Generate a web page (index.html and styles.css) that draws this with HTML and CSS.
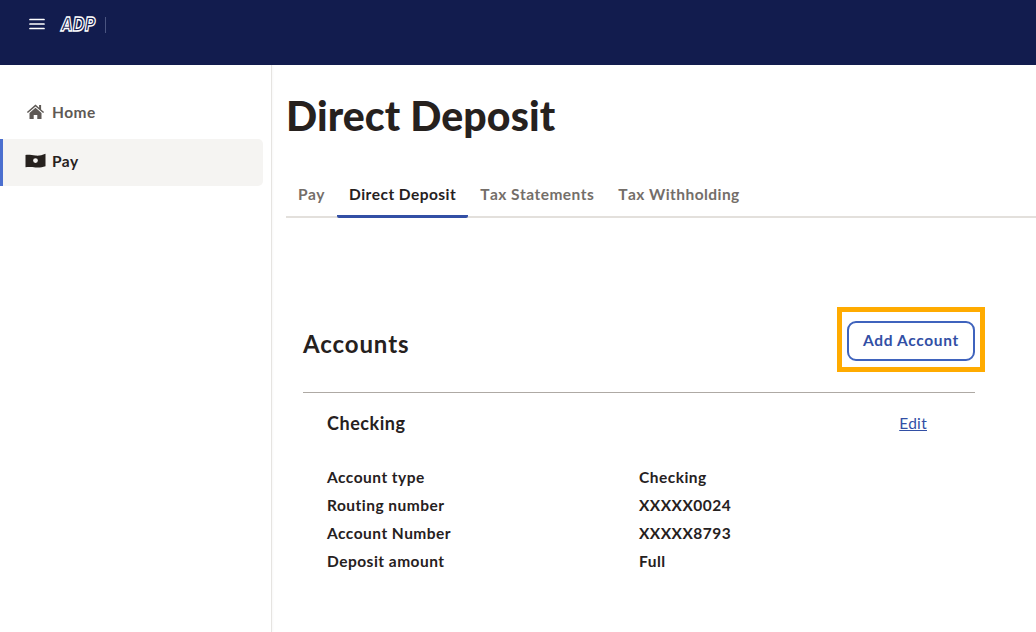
FILE: index.html
```html
<!DOCTYPE html>
<html lang="en">
<head>
<meta charset="utf-8">
<title>Direct Deposit</title>
<link rel="stylesheet" href="styles.css">
</head>
<body>
<header class="topbar">
  <svg class="menu-icon" width="16" height="12" viewBox="0 0 16 12"><path d="M1 1.500h14M1 6h14M1 10.500h14" stroke="#fff" stroke-width="1.700" stroke-linecap="round"/></svg>
  <svg class="logo" width="44" height="24" viewBox="0 0 44 24"><text x="3.500" y="17" class="logo-text" textLength="34" lengthAdjust="spacingAndGlyphs">ADP</text></svg>
  <span class="logo-sep"></span>
</header>
<div class="shell">
  <nav class="sidebar">
    <a class="nav-item">
      <svg class="nav-icon" width="19" height="15" viewBox="0 0 18 15"><path d="M9 .6 .4 8l1 1.100L9 2.600l7.600 6.500 1-1.100-3-2.600V1h-2v2.700L9 .6Z" fill="#5e5955"/><path d="M9 3.800 3 8.900V15h4.200v-4h3.600v4H15V8.900L9 3.800Z" fill="#5e5955"/></svg>
      <span>Home</span>
    </a>
    <a class="nav-item active">
      <svg class="nav-icon" width="21" height="15" viewBox="0 0 21 15"><path fill-rule="evenodd" d="M.5 2c3.500-.6 6.500.3 10 .6 3.500.3 6.500-.4 10-1.900v12.600c-3.500 1.100-6.500 1.400-10 1.100-3.500-.3-6.500-.6-10-.1V2ZM10.500 5.200a2.400 2.400 0 1 0 0 4.800 2.400 2.400 0 0 0 0-4.800Z" fill="#26211e"/></svg>
      <span>Pay</span>
    </a>
  </nav>
  <main class="content">
    <h1 class="page-title">Direct Deposit</h1>
    <div class="tabs">
      <a class="tab">Pay</a>
      <a class="tab current">Direct Deposit</a>
      <a class="tab">Tax Statements</a>
      <a class="tab">Tax Withholding</a>
    </div>
    <section class="accounts">
      <div class="accounts-head">
        <h2 class="accounts-title">Accounts</h2>
        <div class="highlight"><button class="add-btn">Add Account</button></div>
      </div>
      <div class="account">
        <div class="account-head">
          <h3 class="account-name">Checking</h3>
          <a class="edit">Edit</a>
        </div>
        <dl class="details">
          <dt>Account type</dt><dd>Checking</dd>
          <dt>Routing number</dt><dd>XXXXX0024</dd>
          <dt>Account Number</dt><dd>XXXXX8793</dd>
          <dt>Deposit amount</dt><dd>Full</dd>
        </dl>
      </div>
    </section>
  </main>
</div>
</body>
</html>
```
FILE: styles.css
```css
* { box-sizing: border-box; }
html, body { margin: 0; height: 100%; }
body {
  font-family: "Lato", "Inter", sans-serif;
  background: #fff;
  color: #26211e;
  overflow: hidden;
}
.topbar {
  height: 65px;
  background: #121c4e;
  display: flex;
  align-items: flex-start;
  padding: 18px 0 0 29px;
}
.menu-icon { display: block; }
.logo { display: block; margin: -4px 0 0 13px; overflow: visible; }
.logo-text {
  font-family: "DejaVu Sans", sans-serif;
  font-style: oblique;
  font-weight: 700;
  font-size: 19px;
  fill: #121c4e;
  stroke: #fff;
  stroke-width: 1.5px;
}
.logo-sep { width: 1px; height: 16px; background: #4a5480; margin: -1px 0 0 3px; }
.shell { display: flex; height: 567px; }
.sidebar {
  width: 272px;
  flex: none;
  border-right: 1px solid #e6e4e1;
  box-shadow: 1px 0 2px rgba(0,0,0,.03);
  padding: 25px 8px 0 0;
}
.nav-item {
  display: flex;
  align-items: center;
  height: 47px;
  margin-bottom: 2px;
  padding: 0 0 4px 23px;
  font-size: 15.5px;
  font-weight: 700;
  color: #5e5955;
  letter-spacing: .45px;
  border-radius: 0 5px 5px 0;
  border-left: 3px solid transparent;
}
.nav-item span { margin-left: 7px; }
.nav-item.active { background: #f5f4f2; color: #26211e; border-left-color: #4b6fcf; padding-left: 22px; }
.nav-item.active span { margin-left: 6px; }
.nav-icon { display: block; flex: none; }
.content { flex: 1; padding: 0 0 0 14px; min-width: 0; }
.page-title {
  margin: 26px 0 0;
  font-size: 41px;
  line-height: 50px;
  font-weight: 900;
  color: #26211e;
  letter-spacing: .1px;
}
.tabs {
  display: flex;
  margin-top: 38px;
  height: 39px;
  border-bottom: 2px solid #e3e0dc;
}
.tab {
  height: 39px;
  padding: 5px 12px 0;
  font-size: 15.5px;
  line-height: 20px;
  font-weight: 700;
  color: #746e69;
  letter-spacing: .44px;
  font-kerning: none;
  border-bottom: 3px solid transparent;
  border-radius: 2px;
}
.tab.current { color: #26211e; border-bottom-color: #324fa5; }
.accounts { margin: 88px 61px 0 17px; }
.accounts-head {
  display: flex;
  justify-content: space-between;
  align-items: flex-start;
  height: 87px;
  border-bottom: 1px solid #aea9a4;
}
.accounts-title { margin: 23px 0 0; font-size: 24px; line-height: 30px; font-weight: 700; letter-spacing: .9px; }
.highlight {
  border: 5px solid #ffab00;
  padding: 9px 5px 0 5px;
  margin: 1px -10px 0 0;
  height: 65px;
  width: 148px;
  flex: none;
}
.add-btn {
  display: block;
  width: 128px;
  height: 40px;
  border: 2px solid #3f63bd;
  border-radius: 9px;
  background: #fff;
  color: #324fa5;
  font: 700 15.5px/1 "Lato", sans-serif;
  letter-spacing: .65px;
  padding: 0;
}
.account { padding: 0 48px 0 24px; }
.account-head { display: flex; justify-content: space-between; align-items: center; height: 60px; }
.account-name { margin: 0; font-size: 18px; font-weight: 700; letter-spacing: .55px; }
.edit { color: #324fa5; text-decoration: underline; font-size: 15.5px; letter-spacing: .3px; }
.details {
  display: grid;
  grid-template-columns: 312px 1fr;
  grid-auto-rows: 28px;
  margin: 10px 0 0;
  font-size: 15.5px;
  font-weight: 700;
  line-height: 28px;
  letter-spacing: .48px;
}
.details dt, .details dd { margin: 0; }
```
